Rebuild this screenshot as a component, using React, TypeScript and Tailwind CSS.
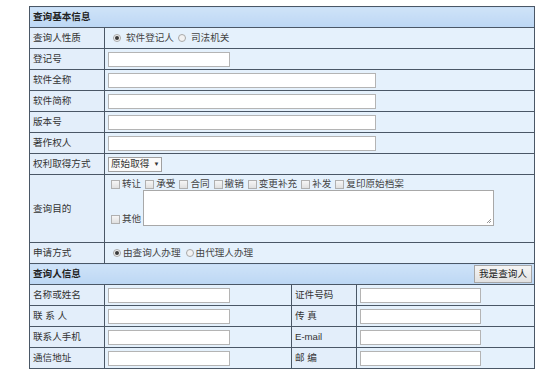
import React from "react";

const font = { fontFamily: '"Liberation Sans", "Noto Sans CJK SC", sans-serif' };

function Radio({ checked }: { checked?: boolean }) {
  return (
    <span className="inline-flex items-center justify-center w-[8px] h-[8px] rounded-full border border-[#a8a8a8] bg-[#f2f2f2] align-middle">
      {checked && <span className="w-[4px] h-[4px] rounded-full bg-[#3a3a3a]" />}
    </span>
  );
}

function Check() {
  return <span className="inline-block w-[9px] h-[9px] border border-[#b0b0b0] bg-gradient-to-b from-[#f6f6f6] to-[#e0e0e0] align-middle" />;
}

function Input({ w }: { w: string }) {
  return <div className={`h-[15px] border border-[#b4b4b4] bg-white ${w}`} />;
}

const label = "pl-[3px] text-[#333] border border-[#4a5766] bg-[#e3eefa] whitespace-nowrap";
const cell = "pl-[3px] border border-[#4a5766] bg-[#e5f1fc]";
const head = "pl-[3px] font-bold text-[#222] border border-[#4a5766] bg-gradient-to-b from-[#cfe3f8] to-[#bcd7f4]";

export default function App() {
  const purposes = ["转让", "承受", "合同", "撤销", "变更补充", "补发", "复印原始档案"];
  return (
    <div className="w-[543px] h-[371px] bg-white pt-[6px] pl-[29px] overflow-hidden" style={font}>
      <table className="border-collapse table-fixed w-[505px] text-[9.6px] leading-[12px]">
        <colgroup>
          <col className="w-[75px]" />
          <col className="w-[187px]" />
          <col className="w-[65px]" />
          <col className="w-[178px]" />
        </colgroup>
        <tbody>
          <tr className="h-[21px]">
            <td colSpan={4} className={head}>查询基本信息</td>
          </tr>
          <tr className="h-[21px]">
            <td className={label}>查询人性质</td>
            <td colSpan={3} className={cell}>
              <div className="flex items-center pl-[5px] text-[#444]">
                <Radio checked />
                <span className="ml-[5px]">软件登记人</span>
                <span className="ml-[4px]"><Radio /></span>
                <span className="ml-[5px]">司法机关</span>
              </div>
            </td>
          </tr>
          <tr className="h-[21px]">
            <td className={label}>登记号</td>
            <td colSpan={3} className={cell}><Input w="w-[122px]" /></td>
          </tr>
          {["软件全称", "软件简称", "版本号", "著作权人"].map((t) => (
            <tr key={t} className="h-[21px]">
              <td className={label}>{t}</td>
              <td colSpan={3} className={cell}><Input w="w-[268px]" /></td>
            </tr>
          ))}
          <tr className="h-[21px]">
            <td className={label}>权利取得方式</td>
            <td colSpan={3} className={cell}>
              <div className="flex items-center w-[54px] h-[15px] border border-[#a0a0a0] bg-[#fafafa] pl-[2px] text-[#333]">
                原始取得
                <span className="ml-[4px] text-[6px]">▼</span>
              </div>
            </td>
          </tr>
          <tr className="h-[68px]">
            <td className={label}>查询目的</td>
            <td colSpan={3} className={`${cell} align-top`}>
              <div className="flex items-center gap-[4px] pt-[3px] pl-[3px] text-[#444]">
                {purposes.map((p) => (
                  <span key={p} className="flex items-center gap-[2px]">
                    <Check />
                    {p}
                  </span>
                ))}
              </div>
              <div className="flex items-end pl-[3px] text-[#444]">
                <span className="flex items-center gap-[2px] pb-[1px]">
                  <Check />
                  其他
                </span>
                <div className="relative ml-[2px] w-[351px] h-[36px] border border-[#a8a8a8] bg-white">
                  <svg className="absolute right-[1px] bottom-[1px]" width="6" height="6" viewBox="0 0 6 6">
                    <path d="M5 1 L1 5 M5 3 L3 5" stroke="#999" strokeWidth="1" />
                  </svg>
                </div>
              </div>
            </td>
          </tr>
          <tr className="h-[21px]">
            <td className={label}>申请方式</td>
            <td colSpan={3} className={cell}>
              <div className="flex items-center pl-[5px] text-[#444]">
                <Radio checked />
                <span className="ml-[2px]">由查询人办理</span>
                <span className="ml-[5px]"><Radio /></span>
                <span className="ml-[2px]">由代理人办理</span>
              </div>
            </td>
          </tr>
          <tr className="h-[21px]">
            <td colSpan={4} className={head}>
              <div className="flex items-center justify-between pr-[2px]">
                <span>查询人信息</span>
                <button className="h-[18px] px-[4px] border border-[#a6a6a6] bg-gradient-to-b from-[#f5f5f5] to-[#e2e2e2] font-normal text-[#222] text-[9.6px]">
                  我是查询人
                </button>
              </div>
            </td>
          </tr>
          {[
            ["名称或姓名", "证件号码"],
            ["联 系 人", "传 真"],
            ["联系人手机", "E-mail"],
            ["通信地址", "邮 编"],
          ].map(([a, b]) => (
            <tr key={a} className="h-[21px]">
              <td className={label}>{a}</td>
              <td className={cell}><Input w="w-[122px]" /></td>
              <td className={label}>{b}</td>
              <td className={cell}><Input w="w-[121px]" /></td>
            </tr>
          ))}
        </tbody>
      </table>
    </div>
  );
}
